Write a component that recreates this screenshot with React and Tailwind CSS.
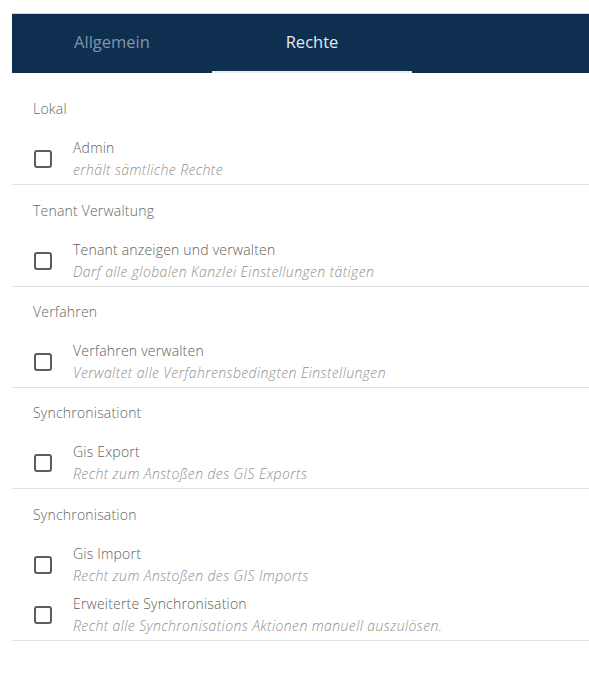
import React from "react";

const sections = [
  { label: "Lokal", items: [{ t: "Admin", d: "erhält sämtliche Rechte" }] },
  { label: "Tenant Verwaltung", extra: true, items: [{ t: "Tenant anzeigen und verwalten", d: "Darf alle globalen Kanzlei Einstellungen tätigen" }] },
  { label: "Verfahren", items: [{ t: "Verfahren verwalten", d: "Verwaltet alle Verfahrensbedingten Einstellungen" }] },
  { label: "Synchronisationt", items: [{ t: "Gis Export", d: "Recht zum Anstoßen des GIS Exports" }] },
  {
    label: "Synchronisation",
    extra: true,
    items: [
      { t: "Gis Import", d: "Recht zum Anstoßen des GIS Imports" },
      { t: "Erweiterte Synchronisation", d: "Recht alle Synchronisations Aktionen manuell auszulösen." },
    ],
  },
];

export default function App() {
  return (
    <div className="w-[589px] h-[679px] bg-white pl-[12px] pt-[13px] font-['Open_Sans',sans-serif]">
      <div className="h-[60px] bg-[#0e2f50] flex border-t border-[#c9d3dd]">
        <div className="w-[200px] flex items-center justify-center text-[16.5px] text-[#8095aa] pb-[2px]">Allgemein</div>
        <div className="w-[200px] flex items-center justify-center text-[16.5px] text-[#e4e9ef] border-b-2 border-[#e8edf2]">Rechte</div>
      </div>
      <div className="pt-[11px]">
        {sections.map((s) => (
          <div key={s.label} className={s.extra ? "border-b border-[#e2e2e2] pt-[1px]" : "border-b border-[#e2e2e2]"}>
            <div className="pl-[21px] pt-[15px] pb-[15px] leading-[20px] text-[14px] tracking-[0.2px] font-light text-[#666]">{s.label}</div>
            {s.items.map((it) => (
              <div key={it.t} className="flex items-center py-[4px] pl-[22px]">
                <div className="w-[18px] h-[18px] border-2 border-[#5c5c5c] rounded-[3px] shrink-0" />
                <div className="ml-[21px]">
                  <div className="leading-[20px] text-[14px] tracking-[0.2px] font-light text-[#5e5e5e]">{it.t}</div>
                  <div className="mt-[2px] leading-[20px] text-[14px] tracking-[0.4px] font-light italic text-[#8f8f8f]">{it.d}</div>
                </div>
              </div>
            ))}
          </div>
        ))}
      </div>
    </div>
  );
}
